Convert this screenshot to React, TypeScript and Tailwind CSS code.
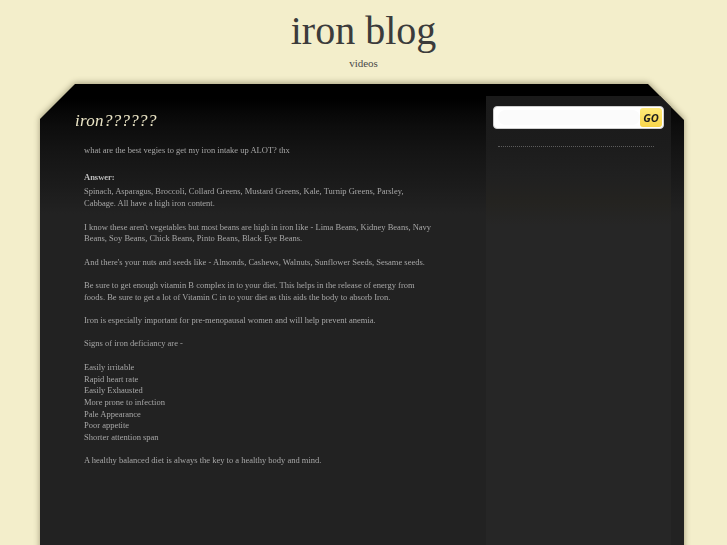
import React from 'react';

const serif = { fontFamily: '"Liberation Serif", "Times New Roman", serif' };

const paragraphs: string[][] = [
  ['Spinach, Asparagus, Broccoli, Collard Greens, Mustard Greens, Kale, Turnip Greens, Parsley, Cabbage. All have a high iron content.'],
  ["I know these aren't vegetables but most beans are high in iron like - Lima Beans, Kidney Beans, Navy Beans, Soy Beans, Chick Beans, Pinto Beans, Black Eye Beans."],
  ["And there's your nuts and seeds like - Almonds, Cashews, Walnuts, Sunflower Seeds, Sesame seeds."],
  ['Be sure to get enough vitamin B complex in to your diet. This helps in the release of energy from foods. Be sure to get a lot of Vitamin C in to your diet as this aids the body to absorb Iron.'],
  ['Iron is especially important for pre-menopausal women and will help prevent anemia.'],
  ['Signs of iron deficiancy are -'],
  [
    'Easily irritable',
    'Rapid heart rate',
    'Easily Exhausted',
    'More prone to infection',
    'Pale Appearance',
    'Poor appetite',
    'Shorter attention span',
  ],
  ['A healthy balanced diet is always the key to a healthy body and mind.'],
];

export default function App() {
  return (
    <div className="min-h-screen bg-[#f3eecb] overflow-hidden" style={serif}>
      {/* header */}
      <div className="h-[84px] flex flex-col items-center">
        <h1 className="pt-[9px] text-[40px] leading-[44px] text-[#3b3b3b] font-normal">iron blog</h1>
        <div className="mt-[3px] text-[11px] leading-[14px] text-[#4a4a4a]">videos</div>
      </div>

      {/* dark panel */}
      <div className="ml-[40px] w-[644px] [filter:drop-shadow(0_-1px_3px_rgba(60,50,20,0.45))]">
        <div className="flex min-h-[480px] bg-[linear-gradient(180deg,#000_0px,#000_14px,#0c0c0c_40px,#151515_70px,#1b1b1b_100px,#222_130px)] [clip-path:polygon(35px_0,608px_0,644px_36px,644px_100%,0_100%,0_35px)]">
          {/* post */}
          <div className="w-[446px]">
            <h2 className="ml-[35px] mt-[27px] text-[17px] leading-[20px] italic tracking-[0.3px] text-[#ebe5c6] font-normal">
              iron??????
            </h2>
            <div className="ml-[44px] mt-[14px] w-[350px] text-[8.5px] leading-[11.7px] text-[#a6a6a6]">
              <p>what are the best vegies to get my iron intake up ALOT? thx</p>
              <p className="mt-[15px] font-bold text-[#bdbdbd]">Answer:</p>
              <div className="mt-[3px] flex flex-col gap-[11.7px]">
                {paragraphs.map((lines, i) => (
                  <p key={i}>
                    {lines.map((l, j) => (
                      <span key={j} className="block">{l}</span>
                    ))}
                  </p>
                ))}
              </div>
            </div>
          </div>

          {/* sidebar */}
          <div className="mt-[12px] w-[185px] bg-[linear-gradient(180deg,#1a1a1a_0px,#1c1c1c_50px,#202020_80px,#242320_105px,#262626_130px)]">
            <div className="mx-[7px] mt-[10px] h-[23px] flex items-center rounded-[4px] border border-[#cfcfcf] bg-white pl-[4px] pr-[1px]">
              <div className="flex-1 h-[15px] rounded-full bg-[#fbfbfb]" />
              <button className="w-[22px] h-[19px] rounded-[3px] bg-[linear-gradient(180deg,#ffea7a,#f9d64a)] text-[11px] font-bold italic text-[#1e1e1e] leading-none [font-family:'Open_Sans','DejaVu_Sans',sans-serif]">
                GO
              </button>
            </div>
            <div className="ml-[12px] mr-[17px] mt-[17px] border-t border-dotted border-[#5c5c5c]" />
          </div>
        </div>
      </div>
    </div>
  );
}
